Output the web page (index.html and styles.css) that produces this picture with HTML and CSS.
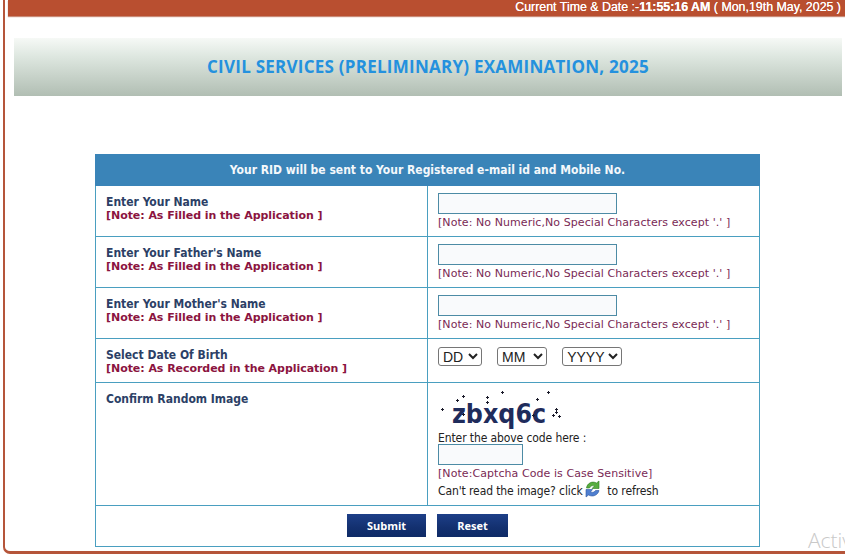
FILE: index.html
```html
<!DOCTYPE html>
<html lang="en">
<head>
<meta charset="utf-8">
<title>Civil Services (Preliminary) Examination, 2025</title>
<link rel="stylesheet" href="styles.css">
</head>
<body>
<div class="frame">
  <div class="timebar">Current Time &amp; Date :-<b>11:55:16 AM</b> ( Mon,19th May, 2025 )</div>
  <div class="banner"><h1>CIVIL SERVICES (PRELIMINARY) EXAMINATION, 2025</h1></div>
  <table class="form">
    <tr class="rowhead"><th colspan="2">Your RID will be sent to Your Registered e-mail id and Mobile No.</th></tr>
    <tr class="row">
      <td class="lab"><span class="name">Enter Your Name</span><span class="warn">[Note: As Filled in the Application ]</span></td>
      <td class="val"><input class="field" type="text"><span class="hint">[Note: No Numeric,No Special Characters except '.' ]</span></td>
    </tr>
    <tr class="row">
      <td class="lab"><span class="name">Enter Your Father's Name</span><span class="warn">[Note: As Filled in the Application ]</span></td>
      <td class="val"><input class="field" type="text"><span class="hint">[Note: No Numeric,No Special Characters except '.' ]</span></td>
    </tr>
    <tr class="row">
      <td class="lab"><span class="name">Enter Your Mother's Name</span><span class="warn">[Note: As Filled in the Application ]</span></td>
      <td class="val"><input class="field" type="text"><span class="hint">[Note: No Numeric,No Special Characters except '.' ]</span></td>
    </tr>
    <tr class="rowdob">
      <td class="lab"><span class="name">Select Date Of Birth</span><span class="warn">[Note: As Recorded in the Application ]</span></td>
      <td class="val dob">
        <select class="sel sel-d"><option>DD</option></select>
        <select class="sel sel-m"><option>MM</option></select>
        <select class="sel sel-y"><option>YYYY</option></select>
      </td>
    </tr>
    <tr class="rowcap">
      <td class="lab"><span class="name">Confirm Random Image</span></td>
      <td class="val">
        <div class="captcha">
          <span class="captcha-text">zbxq6c</span>
          <svg class="specks" width="124" height="40" viewBox="0 0 124 40" aria-hidden="true">
            <path fill="none" stroke="#1a1a2a" stroke-width="1" d="M3 21.500h3M4.500 20v3M18 12.500h3M19.500 11v3M24 8.500h3M25.500 7v3M48 9.500h3M49.500 8v3M48 14.500h3M49.500 13v3M63 4.500h3M64.500 3v3M109 4.500h3M110.500 3v3M98 11.500h3M99.500 10v3M114 27.500h3M115.500 26v3M117 21.500h3M118.500 20v3M117 24.500h3M118.500 23v3M120 28.500h3M121.500 27v3M24 26.500h3M25.500 25v3M94 27.500h3M95.500 26v3"/>
          </svg>
        </div>
        <span class="plain">Enter the above code here :</span>
        <input class="field field-code" type="text">
        <span class="hint hint-tight">[Note:Captcha Code is Case Sensitive]</span>
        <span class="plain refresh">Can't read the image? click
          <svg class="reload" width="17" height="18" viewBox="0 0 17 18" aria-hidden="true">
            <path d="M2.500 8C3 3.500 8 .5 12.500 3L15 1V8.500H8L10.500 6C8.500 5 6.500 6 5.500 8Z" fill="#57ad3f" stroke="#2f7a22" stroke-width=".6"/>
            <path d="M15 10.500C14 15 9 17.500 4.500 15L2 17V9.500H8.500L6.500 12C8.500 13 10.500 12 11.500 10.500Z" fill="#4f7fd0" stroke="#2c56a0" stroke-width=".6"/>
          </svg>
          to refresh</span>
      </td>
    </tr>
    <tr class="rowbtn">
      <td colspan="2"><button class="btn btn-s" type="button">Submit</button><button class="btn btn-r" type="button">Reset</button></td>
    </tr>
  </table>
  <div class="watermark">Activ</div>
</div>
</body>
</html>
```
FILE: styles.css
```css
html, body { margin: 0; padding: 0; background: #fff; height: 100%; overflow: hidden; }
body { font-family: "DejaVu Sans", Verdana, sans-serif; }
.frame {
  position: relative;
  box-sizing: border-box;
  height: 554px;
  width: 860px;
  border-left: 2px solid #b5553a;
  border-bottom: 3px solid #b5553a;
  border-bottom-left-radius: 7px;
  margin-left: 3px;
  padding-left: 3px;
  overflow: hidden;
}
.timebar {
  height: 16px;
  width: 837px;
  background: #b94f30;
  box-shadow: 0 1px 1px #c98a76;
  color: #fff;
  font: 12.4px/15px "Liberation Sans", Arial, sans-serif;
  text-shadow: 0 0 .6px #fff;
  box-sizing: border-box;
  text-align: right;
  padding-right: 4px;
  white-space: nowrap;
}
.timebar b { font-weight: 700; }
.banner {
  margin: 22px 0 0 6px;
  width: 828px;
  height: 58px;
  background: linear-gradient(to bottom, #f6f9f6 0%, #dfe8e1 30%, #b1beb3 100%);
  display: flex;
  align-items: center;
  justify-content: center;
}
.banner h1 {
  margin: 0;
  font: 700 17px/20px "Open Sans", sans-serif;
  color: #2491de;
  letter-spacing: .25px;
}
.form {
  border-collapse: collapse;
  table-layout: fixed;
  width: 665px;
  margin: 58px 0 0 87px;
}
.form td, .form th { border: 1px solid #4a9fc0; padding: 0; vertical-align: top; }
.rowhead th {
  height: 30px;
  background: #3a84b8;
  border-color: #3a84b8;
  color: #f4f8fb;
  font: 700 12px/30px "DejaVu Sans Condensed", "DejaVu Sans", sans-serif;
  font-stretch: condensed;
  text-align: center;
}
.lab { width: 331px; padding: 9px 0 0 10px !important; box-sizing: border-box; }
.val { padding: 7px 0 0 10px !important; box-sizing: border-box; }
.row td { height: 51px; box-sizing: border-box; }
.rowdob td { height: 44px; box-sizing: border-box; }
.rowcap td { height: 123px; box-sizing: border-box; }
.rowbtn td { height: 41px; box-sizing: border-box; text-align: center; padding-top: 8px; }
.name { display: block; font: 700 12px/14px "DejaVu Sans Condensed", "DejaVu Sans", sans-serif; font-stretch: condensed; color: #2c3f66; }
.warn { display: block; font: 700 11px/13px "DejaVu Sans", sans-serif; color: #8b1440; letter-spacing: -.05px; }
.field {
  display: block;
  box-sizing: border-box;
  width: 179px;
  height: 21px;
  margin: 0;
  padding: 0;
  background: #f9fafc;
  border: 1px solid #4d8ba5;
  border-radius: 0;
}
.hint { display: block; font: 11px/14px "DejaVu Sans", sans-serif; color: #7a2a55; margin-top: 2px; letter-spacing: .07px; }
.hint-tight { margin-top: 2px; }
.dob { padding-top: 8px !important; }
.sel {
  font: 14px "Liberation Sans", Arial, sans-serif;
  height: 19px;
  box-sizing: border-box;
  padding: 0;
  color: #222;
  background: #fff;
  border: 1px solid #767676;
  border-radius: 3px;
  vertical-align: top;
}
.sel-d { width: 44px; margin-right: 10px; }
.sel-m { width: 50px; margin-right: 10px; }
.sel-y { width: 60px; }
.captcha { position: relative; height: 42px; width: 124px; }
.captcha-text {
  position: absolute;
  left: 14px;
  top: 9px;
  font: 700 26.5px/30px "DejaVu Sans Condensed", "DejaVu Sans", sans-serif;
  font-stretch: condensed;
  color: #1f2c5c;
}
.specks { position: absolute; left: 0; top: -2px; }
.plain { display: block; font: 12px/12px "DejaVu Sans Condensed", "DejaVu Sans", sans-serif; font-stretch: condensed; color: #222; letter-spacing: -.1px; }
.field-code { width: 85px; height: 21px; margin-top: 0; }
.refresh { margin-top: -1px; }
.reload { vertical-align: -3px; margin: 0 3px 0 -2px; }
.btn {
  box-sizing: border-box;
  height: 23px;
  border: 0;
  padding: 0;
  color: #fff;
  background: linear-gradient(to bottom, #1d3f88, #13306f 60%, #0e2a66);
  font: 700 11px/23px "Open Sans", sans-serif;
  vertical-align: top;
}
.btn-s { width: 79px; margin-right: 11px; }
.btn-r { width: 71px; }
.watermark {
  position: absolute;
  left: 803px;
  top: 527px;
  font: 300 21px/26px "Open Sans", sans-serif;
  color: #c9c9c9;
}
```
